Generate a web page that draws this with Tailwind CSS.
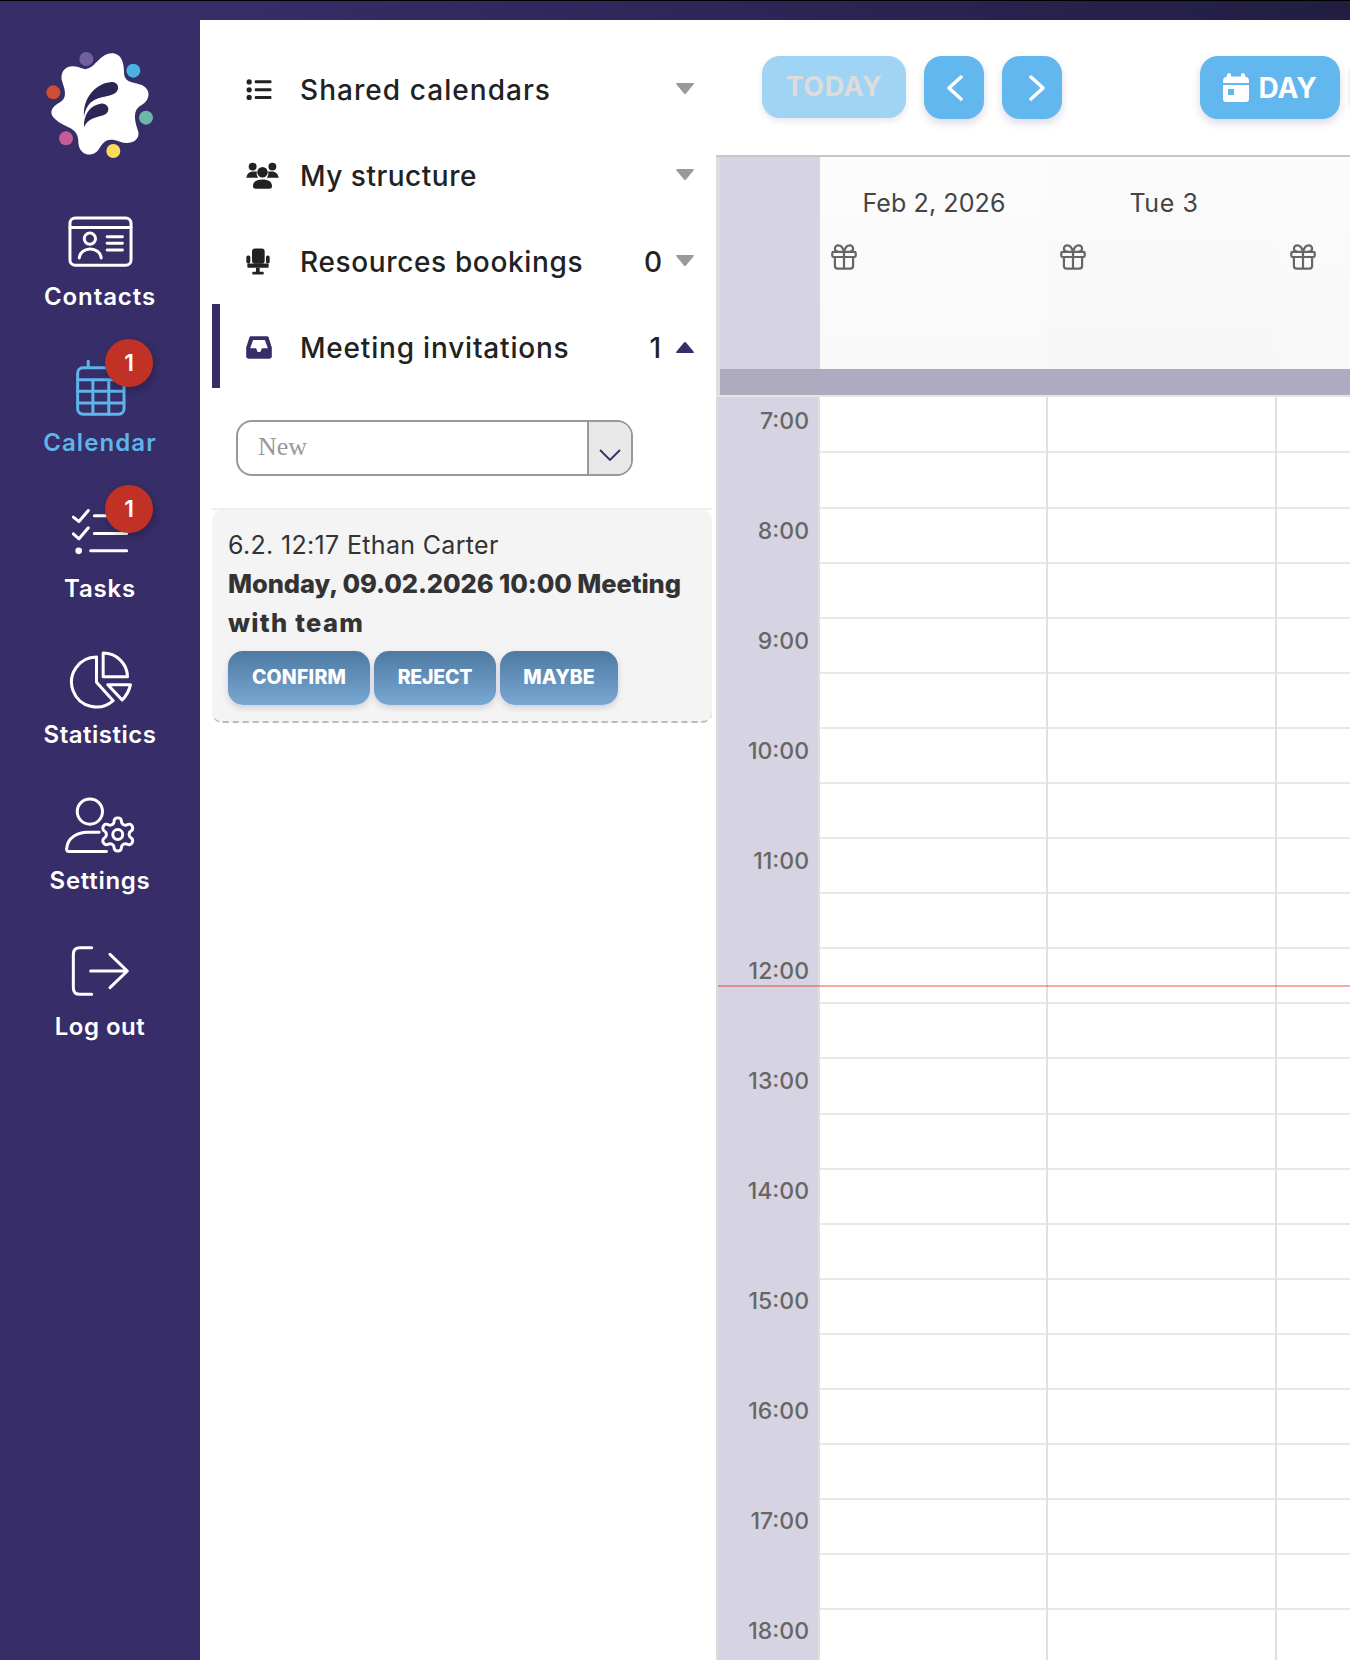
<!DOCTYPE html>
<html><head><meta charset="utf-8"><script src="https://cdn.jsdelivr.net/npm/@tailwindcss/browser@4"></script></head>
<body class="w-[1350px] h-[1660px] overflow-hidden bg-white font-['Inter',sans-serif] flex flex-col">
<div class="h-[20px] shrink-0 border-t border-black bg-linear-to-r from-[#372d69] from-[15%] to-[#211e42]"></div>
<div class="flex flex-1 min-h-0">
<!-- sidebar -->
<aside class="w-[200px] shrink-0 bg-[#372d69] flex flex-col text-white">
  <div class="h-[186px] pt-[20px] flex justify-center items-start">
    <svg width="130" height="130" viewBox="105 120 390 390">
      <path fill="#fff" d="M335 160C365 160 372 190 372 215C372 250 400 245 425 255C455 270 450 300 425 315C395 330 405 365 415 395C420 425 385 435 360 425C320 410 310 425 295 450C275 475 235 465 235 425C235 385 205 385 175 365C145 345 150 325 175 310C205 295 195 270 185 240C180 200 215 190 245 205C280 220 295 160 335 160Z"/>
      <path fill="#2a2757" d="M252 350C248 295 285 250 335 246C352 245 360 262 350 275C335 292 300 285 275 305C262 315 255 332 252 350Z"/>
      <path fill="#2a2757" d="M252 382C250 345 270 315 302 311C322 309 332 328 320 340C305 354 270 345 252 382Z"/>
      <circle cx="259" cy="177" r="21" fill="#735f9d"/><circle cx="400" cy="212" r="21" fill="#4bb2df"/><circle cx="160" cy="277" r="21" fill="#cd4f37"/><circle cx="438" cy="353" r="21" fill="#6fb6a8"/><circle cx="198" cy="415" r="21" fill="#c25d97"/><circle cx="340" cy="453" r="21" fill="#fbdc59"/>
    </svg>
  </div>
  <a class="h-[146px] flex flex-col items-center">
    <div class="h-[70px] flex items-center">
      <svg width="73" height="55" viewBox="190 640 220 165" fill="none" stroke="#fff" stroke-width="9" stroke-linecap="round"><rect x="208" y="652" width="184" height="142" rx="16"/><path d="M208 680H392"/><circle cx="268" cy="714" r="17"/><path d="M236 772C240 736 298 736 302 772M320 708H366M320 728H366M320 748H366"/></svg>
    </div>
    <span class="mt-[6px] text-[24px] leading-[30px] font-semibold tracking-[0.9px]">Contacts</span>
  </a>
  <a class="relative h-[146px] flex flex-col items-center text-[#5db5ea]">
    <div class="h-[70px] flex items-center">
      <svg width="53" height="60" viewBox="220 110 160 180" fill="none" stroke="#5db5ea" stroke-width="9" stroke-linecap="round"><rect x="231" y="142" width="140" height="140" rx="16"/><path d="M231 178H371M231 213H371M231 248H371M277 178V282M325 178V282M263 122V142"/></svg>
    </div>
    <span class="mt-[6px] text-[24px] leading-[30px] font-semibold tracking-[1.1px]">Calendar</span>
    <span class="absolute top-[-13px] left-[105px] w-[48px] h-[48px] rounded-full bg-[#c23126] text-white text-[23px] font-semibold flex items-center justify-center shadow-[2px_3px_8px_rgba(0,0,0,0.25)]">1</span>
  </a>
  <a class="relative h-[146px] flex flex-col items-center">
    <div class="h-[70px] flex items-center">
      <svg width="60" height="53" viewBox="210 560 180 158" fill="none" stroke="#fff" stroke-width="9" stroke-linecap="round" stroke-linejoin="round"><path d="M220 590L237 603L265 570M283 586H376M220 640L237 655L265 622M283 639H380M272 691H380"/><circle cx="236" cy="691" r="10" fill="#fff" stroke="none"/></svg>
    </div>
    <span class="mt-[6px] text-[24px] leading-[30px] font-semibold tracking-[0.8px]">Tasks</span>
    <span class="absolute top-[-13px] left-[105px] w-[48px] h-[48px] rounded-full bg-[#c23126] text-white text-[23px] font-semibold flex items-center justify-center shadow-[2px_3px_8px_rgba(0,0,0,0.25)]">1</span>
  </a>
  <a class="h-[146px] flex flex-col items-center">
    <div class="h-[70px] flex items-center">
      <svg width="67" height="60" viewBox="200 85 200 180" fill="none" stroke="#fff" stroke-width="9" stroke-linejoin="round" stroke-linecap="round"><path d="M288 109V185L338 240A75 75 0 1 1 288 109Z"/><path d="M308 97V168H381A73 73 0 0 0 308 97Z"/><path d="M322 192H390C386 210 377 226 365 238Z"/></svg>
    </div>
    <span class="mt-[6px] text-[24px] leading-[30px] font-semibold tracking-[0.5px]">Statistics</span>
  </a>
  <a class="h-[146px] flex flex-col items-center">
    <div class="h-[70px] flex items-center">
      <svg width="73" height="57" viewBox="190 530 220 170" fill="none" stroke="#fff" stroke-width="9" stroke-linecap="round" stroke-linejoin="round"><circle cx="268" cy="573" r="38"/><path d="M318 693H205Q197 693 198 685C200 650 235 635 260 635H296"/><g transform="translate(352 642) scale(5) translate(-12 -12)" stroke-width="1.8"><path d="M12.22 2h-.44a2 2 0 0 0-2 2v.18a2 2 0 0 1-1 1.73l-.43.25a2 2 0 0 1-2 0l-.15-.08a2 2 0 0 0-2.73.73l-.22.38a2 2 0 0 0 .73 2.73l.15.1a2 2 0 0 1 1 1.72v.51a2 2 0 0 1-1 1.74l-.15.09a2 2 0 0 0-.73 2.73l.22.38a2 2 0 0 0 2.73.73l.15-.08a2 2 0 0 1 2 0l.43.25a2 2 0 0 1 1 1.73V20a2 2 0 0 0 2 2h.44a2 2 0 0 0 2-2v-.18a2 2 0 0 1 1-1.73l.43-.25a2 2 0 0 1 2 0l.15.08a2 2 0 0 0 2.73-.73l.22-.39a2 2 0 0 0-.73-2.73l-.15-.08a2 2 0 0 1-1-1.74v-.5a2 2 0 0 1 1-1.74l.15-.09a2 2 0 0 0 .73-2.73l-.22-.38a2 2 0 0 0-2.73-.73l-.15.08a2 2 0 0 1-2 0l-.43-.25a2 2 0 0 1-1-1.73V4a2 2 0 0 0-2-2z"/><circle cx="12" cy="12" r="3"/></g></svg>
    </div>
    <span class="mt-[6px] text-[24px] leading-[30px] font-semibold tracking-[0.7px]">Settings</span>
  </a>
  <a class="h-[146px] flex flex-col items-center">
    <div class="h-[70px] flex items-center">
      <svg width="60" height="52" viewBox="210 975 180 156" fill="none" stroke="#fff" stroke-width="9" stroke-linecap="round" stroke-linejoin="round"><path d="M275 983H240Q220 983 220 1003V1103Q220 1123 240 1123H275M272 1053H380M330 1003L382 1053L330 1103"/></svg>
    </div>
    <span class="mt-[6px] text-[24px] leading-[30px] font-semibold tracking-[0.5px]">Log out</span>
  </a>
</aside>
<!-- left panel -->
<section class="w-[516px] shrink-0 pt-[26px] text-[#222]">
  <div class="ml-[12px] w-[500px] flex flex-col gap-[2px]">
    <div class="h-[84px] border-l-8 border-transparent pl-[26px] pr-[18px] pt-[2px] flex items-center">
      <div class="w-[54px]"><svg width="26" height="21" viewBox="139 121 78 64" fill="#222"><circle cx="148" cy="130" r="8"/><circle cx="148" cy="154" r="8"/><circle cx="148" cy="177" r="8"/><rect x="165" y="125" width="51" height="9" rx="3"/><rect x="165" y="149" width="51" height="9" rx="3"/><rect x="165" y="173" width="51" height="9" rx="3"/></svg></div>
      <span class="text-[28px] font-medium flex-1 pt-[2px] tracking-[1.05px]">Shared calendars</span>
      <svg width="18" height="12" viewBox="0 0 18 12" class="ml-[15px]"><path fill="#999" d="M1 0H17Q18.500 0 17.500 1.500L10 10.500Q9 11.500 8 10.500L.5 1.500Q-.5 0 1 0Z"/></svg>
    </div>
    <div class="h-[84px] border-l-8 border-transparent pl-[26px] pr-[18px] pt-[2px] flex items-center">
      <div class="w-[54px]"><svg width="33" height="27" viewBox="137 371 100 82" fill="#222"><circle cx="157" cy="385" r="12"/><circle cx="217" cy="385" r="12"/><circle cx="187" cy="402" r="16"/><path d="M138 419C140 404 150 400 160 400L170 400C168 408 170 414 174 419ZM236 419C234 404 224 400 214 400L204 400C206 408 204 414 200 419ZM158 445C158 430 170 424 187 424C204 424 216 430 216 445Q216 452 208 452H166Q158 452 158 445Z"/></svg></div>
      <span class="text-[28px] font-medium flex-1 pt-[2px] tracking-[0.5px]">My structure</span>
      <svg width="18" height="12" viewBox="0 0 18 12" class="ml-[15px]"><path fill="#999" d="M1 0H17Q18.500 0 17.500 1.500L10 10.500Q9 11.500 8 10.500L.5 1.500Q-.5 0 1 0Z"/></svg>
    </div>
    <div class="h-[84px] border-l-8 border-transparent pl-[26px] pr-[18px] pt-[2px] flex items-center">
      <div class="w-[54px]"><svg width="24" height="27" viewBox="137 630 72 80" fill="#222"><rect x="155" y="631" width="38" height="46" rx="9"/><rect x="138" y="652" width="12" height="24" rx="5"/><rect x="197" y="652" width="11" height="24" rx="5"/><rect x="141" y="676" width="64" height="13" rx="3"/><rect x="167" y="689" width="11" height="13"/><rect x="156" y="701" width="34" height="8" rx="2"/></svg></div>
      <span class="text-[28px] font-medium flex-1 pt-[2px] tracking-[0.64px]">Resources bookings</span>
      <span class="text-[28px] font-medium pt-[2px] mr-[-1px]">0</span>
      <svg width="18" height="12" viewBox="0 0 18 12" class="ml-[15px]"><path fill="#999" d="M1 0H17Q18.500 0 17.500 1.500L10 10.500Q9 11.500 8 10.500L.5 1.500Q-.5 0 1 0Z"/></svg>
    </div>
    <div class="h-[84px] border-l-8 border-[#372d69] pl-[26px] pr-[18px] pt-[2px] flex items-center">
      <div class="w-[54px]"><svg width="26" height="23" viewBox="138 893 78 70"><path fill="#372d69" d="M152 894H202Q205 894 206 897L216 928V955Q216 962 209 962H145Q138 962 138 955V928L148 897Q149 894 152 894Z"/><path fill="#fff" d="M159 905H195L204 930H186L181 942H173L168 930H150Z"/></svg></div>
      <span class="text-[28px] font-medium flex-1 pt-[2px] tracking-[0.8px]">Meeting invitations</span>
      <span class="text-[28px] font-medium pt-[2px]">1</span>
      <svg width="18" height="12" viewBox="0 0 18 12" class="ml-[15px] rotate-180"><path fill="#372d69" d="M1 0H17Q18.500 0 17.500 1.500L10 10.500Q9 11.500 8 10.500L.5 1.500Q-.5 0 1 0Z"/></svg>
    </div>
  </div>
  <div class="ml-[36px] mt-[32px] w-[397px] h-[56px] border-2 border-[#999] rounded-[16px] overflow-hidden flex">
    <div class="flex-1 pl-[20px] font-['Liberation_Serif',serif] text-[26px] leading-[49px] text-[#999]">New</div>
    <div class="w-[44px] border-l-2 border-[#999] bg-[#e8e8e8] flex justify-center pt-[27px]"><svg width="22" height="12" viewBox="0 0 22 12" fill="none" stroke="#372d69" stroke-width="1.800"><path d="M1 1L11 11L21 1"/></svg></div>
  </div>
  <div class="ml-[12px] mt-[32px] w-[500px] border-t-2 border-[#eee]">
    <div class="bg-[#f4f4f4] rounded-[10px] border-b-2 border-dashed border-[#bbb] pl-[16px] pt-[17px] pb-[16px]">
      <p class="text-[25px] leading-[37px] text-[#333] tracking-[0.33px]">6.2. 12:17 Ethan Carter</p>
      <p class="text-[25.500px] leading-[39px] text-[#333] font-extrabold tracking-[-0.08px]">Monday, 09.02.2026 10:00 Meeting<br><span class="tracking-[1.3px]">with team</span></p>
      <div class="mt-[9px] flex gap-[4px]">
        <button class="w-[142px] h-[54px] rounded-[15px] bg-linear-to-b from-[#4d7aa2] to-[#79a8d3] text-white text-[19.500px] font-extrabold tracking-[0.2px] shadow-[0_3px_6px_rgba(55,45,105,0.18)]">CONFIRM</button>
        <button class="w-[122px] h-[54px] rounded-[15px] bg-linear-to-b from-[#4d7aa2] to-[#79a8d3] text-white text-[19.500px] font-extrabold tracking-[-0.2px] shadow-[0_3px_6px_rgba(55,45,105,0.18)]">REJECT</button>
        <button class="w-[118px] h-[54px] rounded-[15px] bg-linear-to-b from-[#4d7aa2] to-[#79a8d3] text-white text-[19.500px] font-extrabold shadow-[0_3px_6px_rgba(55,45,105,0.18)]">MAYBE</button>
      </div>
    </div>
  </div>
</section>
<!-- calendar -->
<main class="flex-1 min-w-0 flex flex-col overflow-hidden">
  <div class="h-[135px] shrink-0 pl-[46px] pt-[36px] flex items-start">
    <button class="shrink-0 w-[144px] h-[62px] rounded-[18px] bg-[#9fd4f5] text-[#dcdcdc] text-[27px] font-bold tracking-[0.5px] shadow-[0_3px_6px_rgba(55,45,105,0.12)]">TODAY</button>
    <button class="shrink-0 ml-[18px] pl-[2px] w-[60px] h-[63px] rounded-[18px] bg-[#61b7ee] flex items-center justify-center shadow-[0_4px_8px_rgba(55,45,105,0.18)]"><svg width="18" height="26" viewBox="0 0 18 26" fill="none" stroke="#fff" stroke-width="3.500" stroke-linecap="round" stroke-linejoin="round"><path d="M15 2L3 13L15 24"/></svg></button>
    <button class="shrink-0 ml-[18px] pl-[10px] w-[60px] h-[63px] rounded-[18px] bg-[#61b7ee] flex items-center justify-center shadow-[0_4px_8px_rgba(55,45,105,0.18)]"><svg width="18" height="26" viewBox="0 0 18 26" fill="none" stroke="#fff" stroke-width="3.500" stroke-linecap="round" stroke-linejoin="round"><path d="M3 2L15 13L3 24"/></svg></button>
    <button class="shrink-0 ml-[138px] w-[140px] h-[63px] rounded-[18px] bg-[#61b7ee] text-white text-[28px] font-bold flex items-center justify-center gap-[9px] shadow-[0_4px_8px_rgba(55,45,105,0.18)]"><svg width="26" height="29" viewBox="0 0 26 29" fill="#fff"><path fill-rule="evenodd" d="M6 0Q8 0 8 2V3.500H18V2Q18 0 20 0T22 2V3.500Q26 4 26 8V10H0V8Q0 4 4 3.500V2Q4 0 6 0ZM0 12H26V26Q26 29 23 29H3Q0 29 0 26ZM5 16V22H11V16Z"/></svg>DAY</button>
    <div class="shrink-0 ml-[8px] w-[60px] h-[63px] rounded-[18px] bg-[#f3f3f8]"></div>
  </div>
  <div class="shrink-0 border-t-2 border-[#c8c8c8]">
    <div class="flex h-[212px] border-l-4 border-[#dddddd]">
      <div class="w-[100px] bg-[#d6d4e2]"></div>
      <div class="w-[227px] bg-linear-to-b from-[#fcfcfc] to-[#f9f9f9] pt-[27px] pl-[1px]"><div class="text-center text-[25px] leading-[38px] text-[#444] tracking-[0.1px]">Feb 2, 2026</div>
        <svg class="ml-[10px] mt-[22px]" width="26" height="26" viewBox="2 2 20 20" fill="none" stroke="#666" stroke-width="1.700" stroke-linecap="round" stroke-linejoin="round"><rect x="3" y="8" width="18" height="4" rx="1"/><path d="M12 8v13M19 12v7a2 2 0 0 1-2 2H7a2 2 0 0 1-2-2v-7M7.500 8a2.500 2.500 0 0 1 0-5A4.800 8 0 0 1 12 8a4.800 8 0 0 1 4.500-5 2.500 2.500 0 0 1 0 5"/></svg></div>
      <div class="w-[230px] bg-linear-to-b from-[#fbfbfb] to-[#f7f7f7] pt-[27px] pl-[4px]"><div class="text-center text-[25px] leading-[38px] text-[#444] tracking-[0.6px]">Tue 3</div>
        <svg class="ml-[9px] mt-[22px]" width="26" height="26" viewBox="2 2 20 20" fill="none" stroke="#666" stroke-width="1.700" stroke-linecap="round" stroke-linejoin="round"><rect x="3" y="8" width="18" height="4" rx="1"/><path d="M12 8v13M19 12v7a2 2 0 0 1-2 2H7a2 2 0 0 1-2-2v-7M7.500 8a2.500 2.500 0 0 1 0-5A4.800 8 0 0 1 12 8a4.800 8 0 0 1 4.500-5 2.500 2.500 0 0 1 0 5"/></svg></div>
      <div class="flex-1 bg-linear-to-b from-[#fbfbfb] to-[#f8f8f8] pt-[65px]">
        <svg class="ml-[13px] mt-[22px]" width="26" height="26" viewBox="2 2 20 20" fill="none" stroke="#666" stroke-width="1.700" stroke-linecap="round" stroke-linejoin="round"><rect x="3" y="8" width="18" height="4" rx="1"/><path d="M12 8v13M19 12v7a2 2 0 0 1-2 2H7a2 2 0 0 1-2-2v-7M7.500 8a2.500 2.500 0 0 1 0-5A4.800 8 0 0 1 12 8a4.800 8 0 0 1 4.500-5 2.500 2.500 0 0 1 0 5"/></svg></div>
    </div>
    <div class="h-[26px] border-l-4 border-[#dddddd] bg-[#aeaac0]"></div>
    <div class="h-[2px] bg-[#e5e5e5]"></div>
  </div>
  <div class="relative flex flex-1 min-h-0 border-l-2 border-[#dddddd]">
    <div class="w-[102px] shrink-0 bg-[#d6d4e2] border-r-2 border-[#e0e0e0] text-right pr-[9px] text-[#666] text-[23px] font-medium leading-[48px]">
      <div class="h-[110px]">7:00</div><div class="h-[110px]">8:00</div><div class="h-[110px]">9:00</div><div class="h-[110px]">10:00</div><div class="h-[110px]">11:00</div><div class="h-[110px]">12:00</div><div class="h-[110px]">13:00</div><div class="h-[110px]">14:00</div><div class="h-[110px]">15:00</div><div class="h-[110px]">16:00</div><div class="h-[110px]">17:00</div><div class="h-[110px]">18:00</div>
    </div>
    <div class="relative flex-1 pt-[2px]">
      <div class="h-[54px] border-b-2 border-[#e8e8e8]"></div><div class="h-[56px] border-b-2 border-[#e8e8e8]"></div><div class="h-[55.050px] border-b-2 border-[#e8e8e8]"></div><div class="h-[55.050px] border-b-2 border-[#e8e8e8]"></div><div class="h-[55.050px] border-b-2 border-[#e8e8e8]"></div><div class="h-[55.050px] border-b-2 border-[#e8e8e8]"></div>
      <div class="h-[55.050px] border-b-2 border-[#e8e8e8]"></div><div class="h-[55.050px] border-b-2 border-[#e8e8e8]"></div><div class="h-[55.050px] border-b-2 border-[#e8e8e8]"></div><div class="h-[55.050px] border-b-2 border-[#e8e8e8]"></div><div class="h-[55.050px] border-b-2 border-[#e8e8e8]"></div><div class="h-[55.050px] border-b-2 border-[#e8e8e8]"></div>
      <div class="h-[55.050px] border-b-2 border-[#e8e8e8]"></div><div class="h-[55.050px] border-b-2 border-[#e8e8e8]"></div><div class="h-[55.050px] border-b-2 border-[#e8e8e8]"></div><div class="h-[55.050px] border-b-2 border-[#e8e8e8]"></div><div class="h-[55.050px] border-b-2 border-[#e8e8e8]"></div><div class="h-[55.050px] border-b-2 border-[#e8e8e8]"></div>
      <div class="h-[55.050px] border-b-2 border-[#e8e8e8]"></div><div class="h-[55.050px] border-b-2 border-[#e8e8e8]"></div><div class="h-[55.050px] border-b-2 border-[#e8e8e8]"></div><div class="h-[55.050px] border-b-2 border-[#e8e8e8]"></div><div class="h-[55.050px] border-b-2 border-[#e8e8e8]"></div><div class="h-[55.050px] border-b-2 border-[#e8e8e8]"></div>
      <div class="absolute top-0 bottom-0 left-[226px] w-[2px] bg-[#e0e0e0]"></div>
      <div class="absolute top-0 bottom-0 left-[455px] w-[2px] bg-[#e0e0e0]"></div>
    </div>
    <div class="absolute left-0 right-0 top-[588px] h-[2px] bg-[#eb281e]/40"></div>
  </div>
</main>
</div>
</body></html>
